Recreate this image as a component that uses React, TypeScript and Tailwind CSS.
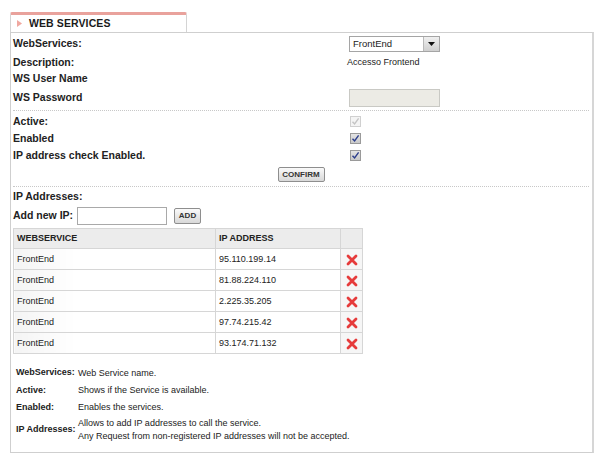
import React from 'react';

// Small checkbox drawn as a box with a tick
const Check = ({ disabled = false }: { disabled?: boolean }) => (
    <span
        className={`inline-flex w-[11px] h-[11px] items-center justify-center border ${
            disabled ? 'border-[#d0d0d0] bg-[#f4f4f4]' : 'border-[#9a9a9a] bg-gradient-to-b from-[#e4e4e4] to-[#c9c9c9]'
        }`}
    >
        <svg width="9" height="9" viewBox="0 0 9 9">
            <path
                d="M1.5 4.8 L3.6 7 L7.6 1.4"
                fill="none"
                stroke={disabled ? '#c4c4c4' : '#2c3e8c'}
                strokeWidth="1.4"
            />
        </svg>
    </span>
);

const DeleteIcon = () => (
    <svg width="12" height="12" viewBox="0 0 12 12">
        <path d="M2 2 L10 10 M10 2 L2 10" stroke="#e63b3b" strokeWidth="2.8" strokeLinecap="round" />
    </svg>
);

const rows = ['95.110.199.14', '81.88.224.110', '2.225.35.205', '97.74.215.42', '93.174.71.132'];

const legend = [
    { label: 'WebServices:', text: ['Web Service name.'], h: 'h-[18px]' },
    { label: 'Active:', text: ['Shows if the Service is available.'], h: 'h-[17px]' },
    { label: 'Enabled:', text: ['Enables the services.'], h: 'h-[17px]' },
    {
        label: 'IP Addresses:',
        text: ['Allows to add IP addresses to call the service.', 'Any Request from non-registered IP addresses will not be accepted.'],
        h: 'h-[28px]',
    },
];

export default function App() {
    return (
        <div className="w-[601px] h-[454px] bg-white pt-3 pl-[10px] pr-[7px] font-['Liberation_Sans',Arial,sans-serif] text-[#222]">
            {/* --- Tab --- */}
            <div className="w-[177px] h-[20px] border-t-[3px] border-t-[#e9a29c] border-x border-x-[#d4d4d4] rounded-t-[2px] flex items-center pl-[6px]">
                <svg width="5" height="7" viewBox="0 0 5 7" className="mr-[7px]">
                    <path d="M0 0 L5 3.5 L0 7 Z" fill="#f0a8a0" />
                </svg>
                <span className="text-[10.5px] font-bold tracking-[0.1px] text-[#1a1a1a]">WEB SERVICES</span>
            </div>

            {/* --- Panel --- */}
            <div className="w-[584px] h-[421px] border border-[#cfcfcf] border-r-2 border-r-[#d6d6d6] pl-[2px] pr-[3px]">
                <div className="text-[10.5px] font-bold">
                    <div className="flex items-center h-[21px]">
                        <span className="w-[336px]">WebServices:</span>
                        <div className="flex w-[91px] h-[16px] border border-[#a5a5a5] bg-white">
                            <span className="flex-1 pl-[3px] text-[9.5px] font-normal leading-[14px]">FrontEnd</span>
                            <span className="w-[16px] h-full border-l border-[#b9b9b9] bg-gradient-to-b from-[#f0f0f0] to-[#cfcfcf] flex items-center justify-center">
                                <svg width="7" height="4" viewBox="0 0 7 4">
                                    <path d="M0 0 L7 0 L3.5 4 Z" fill="#111" />
                                </svg>
                            </span>
                        </div>
                    </div>
                    <div className="flex items-center h-[17px]">
                        <span className="w-[334px]">Description:</span>
                        <span className="text-[9px] font-normal">Accesso Frontend</span>
                    </div>
                    <div className="flex items-center h-[16px]">
                        <span>WS User Name</span>
                    </div>
                    <div className="flex items-center h-[21px]">
                        <span className="w-[336px]">WS Password</span>
                        <span className="w-[91px] h-[18px] border border-[#c9c9c4] bg-[#ecebe5]" />
                    </div>
                </div>

                <div className="mt-[2px] border-t border-dotted border-[#c8c8c8]" />

                <div className="text-[10.5px] font-bold pt-[2px]">
                    <div className="flex items-center h-[17px]">
                        <span className="w-[337px]">Active:</span>
                        <Check disabled />
                    </div>
                    <div className="flex items-center h-[17px]">
                        <span className="w-[337px]">Enabled</span>
                        <Check />
                    </div>
                    <div className="flex items-center h-[17px]">
                        <span className="w-[337px]">IP address check Enabled.</span>
                        <Check />
                    </div>
                    <div className="flex justify-center pt-[3px]">
                        <button className="w-[47px] h-[15px] border border-[#8e8e8e] rounded-[2px] bg-gradient-to-b from-[#fafafa] to-[#d8d8d8] text-[8px] font-bold text-[#333] leading-none">
                            CONFIRM
                        </button>
                    </div>
                </div>

                <div className="mt-[4px] border-t border-dotted border-[#c8c8c8]" />

                <div className="text-[10.5px] font-bold">
                    <div className="flex items-center h-[19px] pt-px">IP Addresses:</div>
                    <div className="flex items-center h-[19px]">
                        <span className="w-[64px]">Add new IP:</span>
                        <span className="w-[90px] h-[18px] border border-[#a9a9a9] bg-white" />
                        <button className="ml-[7px] w-[27px] h-[16px] border border-[#8e8e8e] rounded-[2px] bg-gradient-to-b from-[#fafafa] to-[#d8d8d8] text-[8px] font-bold text-[#333] leading-none">
                            ADD
                        </button>
                    </div>
                </div>

                {/* --- IP table --- */}
                <table className="mt-[3px] w-[350px] border-collapse border border-[#dedede] text-[9px] text-[#222]">
                    <thead>
                        <tr className="h-[20px] bg-[#ececec]">
                            <th className="w-[202px] pl-[3px] text-left font-bold border border-[#d6d6d6]">WEBSERVICE</th>
                            <th className="w-[125px] pl-[3px] text-left font-bold border border-[#d6d6d6]">IP ADDRESS</th>
                            <th className="border border-[#d6d6d6]" />
                        </tr>
                    </thead>
                    <tbody>
                        {rows.map((ip) => (
                            <tr key={ip} className="h-[21px]">
                                <td className="pl-[3px] pt-px border border-[#d6d6d6] bg-gradient-to-r from-[#f4f4f4] to-white to-[30%]">FrontEnd</td>
                                <td className="pl-[3px] pt-px border border-[#d6d6d6]">{ip}</td>
                                <td className="border border-[#d6d6d6] bg-[#f6f6f6]">
                                    <div className="flex justify-center pt-px">
                                        <DeleteIcon />
                                    </div>
                                </td>
                            </tr>
                        ))}
                    </tbody>
                </table>

                {/* --- Legend --- */}
                <div className="mt-[10px] pl-[3px] text-[9px]">
                    {legend.map((l) => (
                        <div key={l.label} className={`flex items-center ${l.h}`}>
                            <span className="w-[62px] font-bold">{l.label}</span>
                            <div className="leading-[13px]">
                                {l.text.map((t) => (
                                    <div key={t}>{t}</div>
                                ))}
                            </div>
                        </div>
                    ))}
                </div>
            </div>
        </div>
    );
}
